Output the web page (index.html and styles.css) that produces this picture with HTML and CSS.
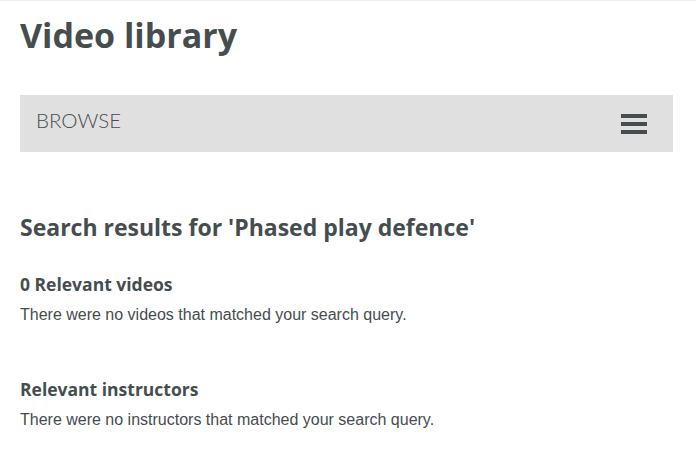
FILE: index.html
```html
<!DOCTYPE html>
<html lang="en">
<head>
  <meta charset="UTF-8">
  <meta name="viewport" content="width=device-width, initial-scale=1.0">
  <title>Video library</title>
  <link rel="stylesheet" href="styles.css">
</head>
<body>
  <div class="topline"></div>
  <div class="container">
    <h1>Video library</h1>

    <div class="browse-bar">
      <span class="browse-label">BROWSE</span>
      <button class="menu-toggle" aria-label="Menu">
        <span></span><span></span><span></span>
      </button>
    </div>

    <h2>Search results for 'Phased play defence'</h2>

    <div class="result-section">
      <h3>0 Relevant videos</h3>
      <p>There were no videos that matched your search query.</p>
    </div>

    <div class="result-section">
      <h3>Relevant instructors</h3>
      <p>There were no instructors that matched your search query.</p>
    </div>
  </div>
</body>
</html>
```

FILE: styles.css
```css
body {
  font-family: "Liberation Sans", Arial, sans-serif;
  margin: 0;
  background-color: #fff;
  color: #454d4f;
}

.topline {
  height: 1px;
  background-color: #eeeeee;
}

.container {
  padding: 0 23px 0 20px;
}

h1,
h2,
h3 {
  font-family: "Open Sans", Lato, sans-serif;
  font-weight: 700;
  margin: 0;
}

h1 {
  font-size: 34px;
  line-height: 40px;
  margin-top: 14px;
}

.browse-bar {
  margin-top: 40px;
  height: 57px;
  background-color: #e0e0e0;
  display: flex;
  align-items: flex-start;
  justify-content: space-between;
  padding: 0 26px 0 16px;
}

.browse-label {
  font-family: Lato, "Open Sans", sans-serif;
  font-weight: 300;
  font-size: 20.5px;
  margin-top: 13px;
}

.menu-toggle {
  margin-top: 19px;
  width: 26px;
  padding: 0;
  border: none;
  background: none;
  display: flex;
  flex-direction: column;
  gap: 4px;
}

.menu-toggle span {
  display: block;
  height: 4px;
  background-color: #454d4f;
}

h2 {
  font-size: 23px;
  line-height: 32px;
  margin-top: 59px;
}

.result-section {
  margin-top: 29px;
}

.result-section + .result-section {
  margin-top: 52px;
}

h3 {
  font-size: 17.5px;
  line-height: 24px;
}

p {
  font-size: 16px;
  margin: 9px 0 0;
  line-height: 20px;
}
```
